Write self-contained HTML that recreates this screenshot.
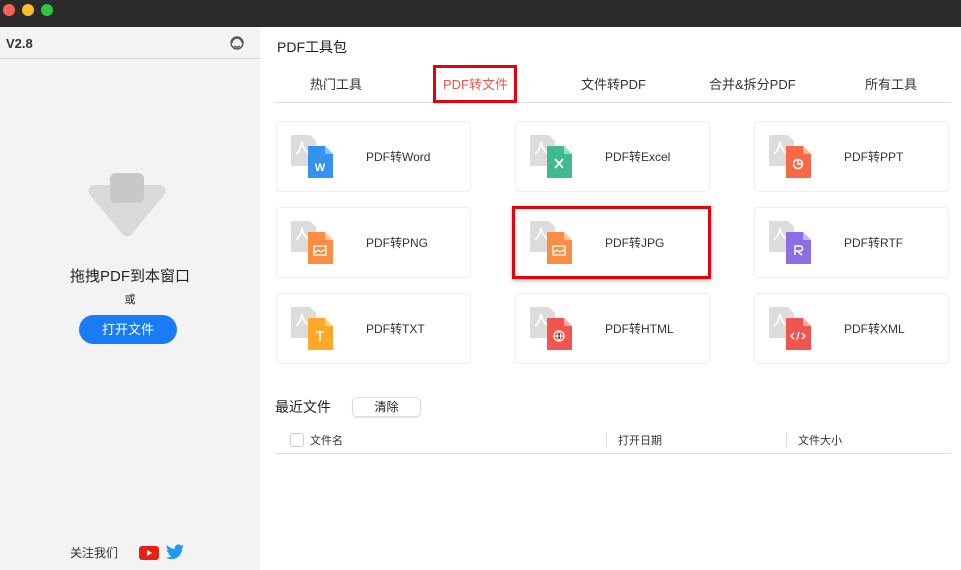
<!DOCTYPE html>
<html><head><meta charset="utf-8"><style>
*{margin:0;padding:0;box-sizing:border-box}
body{width:961px;height:570px;overflow:hidden;font-family:"Liberation Sans","Noto Sans CJK SC",sans-serif;background:#fff;position:relative;color:#222}
.tb{position:absolute;left:0;top:0;width:961px;height:27px;background:#2c2b2c}
.dot{position:absolute;top:4px;width:12px;height:12px;border-radius:50%}
.side{position:absolute;left:0;top:27px;width:260px;height:543px;background:#f4f3f4}
.abs{position:absolute}
.card{position:absolute;width:195px;height:71px;border:1px solid #eeeeee;border-radius:4px;background:#fff}
.card svg{position:absolute;left:13px;top:12px}
.card span{position:absolute;left:89px;top:26px;font-size:12px;color:#333}
.tab{position:absolute;top:74px;font-size:13px;color:#333}
</style></head><body>
<div class="tb"><div class="dot" style="left:3px;background:#fe5f57"></div><div class="dot" style="left:22px;background:#febc2e"></div><div class="dot" style="left:41px;background:#28c840"></div></div>
<div class="side">
<div class="abs" style="left:6px;top:9px;font-size:13px;font-weight:bold;color:#333">V2.8</div>
<svg class="abs" style="left:229px;top:8px" width="16" height="16" viewBox="0 0 16 16" fill="none" stroke="#555" stroke-width="1.4"><circle cx="8" cy="8" r="6"/><path d="M3 8a5 5 0 0 1 10 0M5 11c2 2 5 1 6 0"/></svg>
<div class="abs" style="left:0;top:31px;width:260px;height:1px;background:#d8d8d8"></div>
<svg class="abs" style="left:86px;top:146px" width="82" height="66" viewBox="0 0 82 66"><path d="M8 12h66a6 6 0 0 1 4 10L45 62a6 6 0 0 1-8 0L4 22a6 6 0 0 1 4-10z" fill="#d9d9d9"/><rect x="24" y="0" width="34" height="30" rx="6" fill="#c8c8c8"/></svg>
<div class="abs" style="left:0;width:260px;text-align:center;top:238px;font-size:15px;color:#222">拖拽PDF到本窗口</div>
<div class="abs" style="left:0;width:260px;text-align:center;top:264px;font-size:11px;color:#222">或</div>
<div class="abs" style="left:79px;top:288px;width:98px;height:29px;border-radius:15px;background:#1a7cf5;color:#fff;font-size:13px;text-align:center;line-height:29px">打开文件</div>
<div class="abs" style="left:70px;top:517px;font-size:12px;color:#333">关注我们</div>
<svg class="abs" style="left:139px;top:519px" width="20" height="14" viewBox="0 0 20 14"><rect width="20" height="14" rx="3" fill="#e62117"/><path d="M8 4l5 3-5 3z" fill="#fff"/></svg>
<svg class="abs" style="left:166px;top:517px" width="18" height="16" viewBox="0 0 24 20"><path d="M24 2.4a10 10 0 0 1-2.8.8A5 5 0 0 0 23.3.4a10 10 0 0 1-3.1 1.2A4.9 4.9 0 0 0 11.8 6 14 14 0 0 1 1.7.9a4.9 4.9 0 0 0 1.5 6.6 5 5 0 0 1-2.2-.6 4.9 4.9 0 0 0 4 4.9 5 5 0 0 1-2.2.1 4.9 4.9 0 0 0 4.6 3.4A9.9 9.9 0 0 1 0 17.3 14 14 0 0 0 7.5 19.5c9 0 14-7.5 14-14v-.6A10 10 0 0 0 24 2.4z" fill="#1d9bf0"/></svg>
</div>
<div class="abs" style="left:277px;top:37px;font-size:14px;color:#222">PDF工具包</div>
<div class="tab" style="left:310px">热门工具</div>
<div class="tab" style="left:443px;color:#e55a4e">PDF转文件</div>
<div class="tab" style="left:581px">文件转PDF</div>
<div class="tab" style="left:709px">合并&amp;拆分PDF</div>
<div class="tab" style="left:865px">所有工具</div>
<div class="abs" style="left:275px;top:102px;width:676px;height:1px;background:#dcdcdc"></div>
<div class="abs" style="left:433px;top:65px;width:84px;height:38px;border:3px solid #e8000b"></div>

<div class="card" style="left:276px;top:121px"><svg width="45" height="45" viewBox="0 0 45 45"><path d="M1 1h19l6 6v25H1z" fill="#dcdcdc"/><path d="M6 20c3-2 5-6 6-12 1 6 4 10 8 12" stroke="#fff" stroke-width="1.6" fill="none"/><path d="M18 12h17l8 8v24H18z" fill="#3492f0"/><path d="M35 12v8h8z" fill="#8cc2f6"/><text x="30" y="37" font-size="11" font-weight="bold" fill="#fff" text-anchor="middle" font-family="Liberation Sans">W</text></svg><span>PDF转Word</span></div>
<div class="card" style="left:515px;top:121px"><svg width="45" height="45" viewBox="0 0 45 45"><path d="M1 1h19l6 6v25H1z" fill="#dcdcdc"/><path d="M6 20c3-2 5-6 6-12 1 6 4 10 8 12" stroke="#fff" stroke-width="1.6" fill="none"/><path d="M18 12h17l8 8v24H18z" fill="#3fb98f"/><path d="M35 12v8h8z" fill="#9ddcc6"/><path d="M26 25l8 9M34 25l-8 9" stroke="#fff" stroke-width="1.8"/></svg><span>PDF转Excel</span></div>
<div class="card" style="left:754px;top:121px"><svg width="45" height="45" viewBox="0 0 45 45"><path d="M1 1h19l6 6v25H1z" fill="#dcdcdc"/><path d="M6 20c3-2 5-6 6-12 1 6 4 10 8 12" stroke="#fff" stroke-width="1.6" fill="none"/><path d="M18 12h17l8 8v24H18z" fill="#f76a45"/><path d="M35 12v8h8z" fill="#fbb39f"/><circle cx="30" cy="30" r="4.5" stroke="#fff" stroke-width="1.5" fill="none"/><path d="M30 26v4h4" stroke="#fff" stroke-width="1.5" fill="none"/></svg><span>PDF转PPT</span></div>

<div class="card" style="left:276px;top:207px"><svg width="45" height="45" viewBox="0 0 45 45"><path d="M1 1h19l6 6v25H1z" fill="#dcdcdc"/><path d="M6 20c3-2 5-6 6-12 1 6 4 10 8 12" stroke="#fff" stroke-width="1.6" fill="none"/><path d="M18 12h17l8 8v24H18z" fill="#fb8d43"/><path d="M35 12v8h8z" fill="#fdc59f"/><rect x="24" y="26" width="12" height="9" stroke="#fff" stroke-width="1.3" fill="none"/><path d="M24 33l4-3 3 2 5-3" stroke="#fff" stroke-width="1.2" fill="none"/></svg><span>PDF转PNG</span></div>
<div class="card" style="left:515px;top:207px"><svg width="45" height="45" viewBox="0 0 45 45"><path d="M1 1h19l6 6v25H1z" fill="#dcdcdc"/><path d="M6 20c3-2 5-6 6-12 1 6 4 10 8 12" stroke="#fff" stroke-width="1.6" fill="none"/><path d="M18 12h17l8 8v24H18z" fill="#fb8d43"/><path d="M35 12v8h8z" fill="#fdc59f"/><rect x="24" y="26" width="12" height="9" stroke="#fff" stroke-width="1.3" fill="none"/><path d="M24 33l4-3 3 2 5-3" stroke="#fff" stroke-width="1.2" fill="none"/></svg><span>PDF转JPG</span></div>
<div class="card" style="left:754px;top:207px"><svg width="45" height="45" viewBox="0 0 45 45"><path d="M1 1h19l6 6v25H1z" fill="#dcdcdc"/><path d="M6 20c3-2 5-6 6-12 1 6 4 10 8 12" stroke="#fff" stroke-width="1.6" fill="none"/><path d="M18 12h17l8 8v24H18z" fill="#8c6ee0"/><path d="M35 12v8h8z" fill="#c6b7f0"/><path d="M27 35v-9h5a2.5 2.5 0 0 1 0 5h-3l5 4" stroke="#fff" stroke-width="1.5" fill="none"/></svg><span>PDF转RTF</span></div>

<div class="card" style="left:276px;top:293px"><svg width="45" height="45" viewBox="0 0 45 45"><path d="M1 1h19l6 6v25H1z" fill="#dcdcdc"/><path d="M6 20c3-2 5-6 6-12 1 6 4 10 8 12" stroke="#fff" stroke-width="1.6" fill="none"/><path d="M18 12h17l8 8v24H18z" fill="#fca82a"/><path d="M35 12v8h8z" fill="#fdd494"/><path d="M26 26h8M30 26v9" stroke="#fff" stroke-width="1.5"/></svg><span>PDF转TXT</span></div>
<div class="card" style="left:515px;top:293px"><svg width="45" height="45" viewBox="0 0 45 45"><path d="M1 1h19l6 6v25H1z" fill="#dcdcdc"/><path d="M6 20c3-2 5-6 6-12 1 6 4 10 8 12" stroke="#fff" stroke-width="1.6" fill="none"/><path d="M18 12h17l8 8v24H18z" fill="#f0564f"/><path d="M35 12v8h8z" fill="#f7aaa6"/><circle cx="30" cy="30" r="5" stroke="#fff" stroke-width="1.3" fill="none"/><path d="M25 30h10M30 25c-2 3-2 7 0 10M30 25c2 3 2 7 0 10" stroke="#fff" stroke-width="1"/></svg><span>PDF转HTML</span></div>
<div class="card" style="left:754px;top:293px"><svg width="45" height="45" viewBox="0 0 45 45"><path d="M1 1h19l6 6v25H1z" fill="#dcdcdc"/><path d="M6 20c3-2 5-6 6-12 1 6 4 10 8 12" stroke="#fff" stroke-width="1.6" fill="none"/><path d="M18 12h17l8 8v24H18z" fill="#f0564f"/><path d="M35 12v8h8z" fill="#f7aaa6"/><path d="M26 27l-3 3 3 3M34 27l3 3-3 3M31 26l-2 8" stroke="#fff" stroke-width="1.4" fill="none"/></svg><span>PDF转XML</span></div>

<div class="abs" style="left:512px;top:206px;width:199px;height:73px;border:3px solid #e8000b;box-shadow:0 2px 4px rgba(0,0,0,.25)"></div>

<div class="abs" style="left:275px;top:397px;font-size:14px;color:#222">最近文件</div>
<div class="abs" style="left:352px;top:397px;width:69px;height:20px;border:1px solid #dcdcdc;border-radius:5px;font-size:12px;text-align:center;line-height:19px;box-shadow:0 1px 1px rgba(0,0,0,.1)">清除</div>
<div class="abs" style="left:290px;top:433px;width:14px;height:14px;border:1px solid #ccc;border-radius:3px;background:#fff"></div>
<div class="abs" style="left:310px;top:432px;font-size:11px;color:#333">文件名</div>
<div class="abs" style="left:606px;top:432px;width:1px;height:15px;background:#ddd"></div>
<div class="abs" style="left:618px;top:432px;font-size:11px;color:#333">打开日期</div>
<div class="abs" style="left:786px;top:432px;width:1px;height:15px;background:#ddd"></div>
<div class="abs" style="left:798px;top:432px;font-size:11px;color:#333">文件大小</div>
<div class="abs" style="left:275px;top:453px;width:676px;height:1px;background:#e0e0e0"></div>
</body></html>
